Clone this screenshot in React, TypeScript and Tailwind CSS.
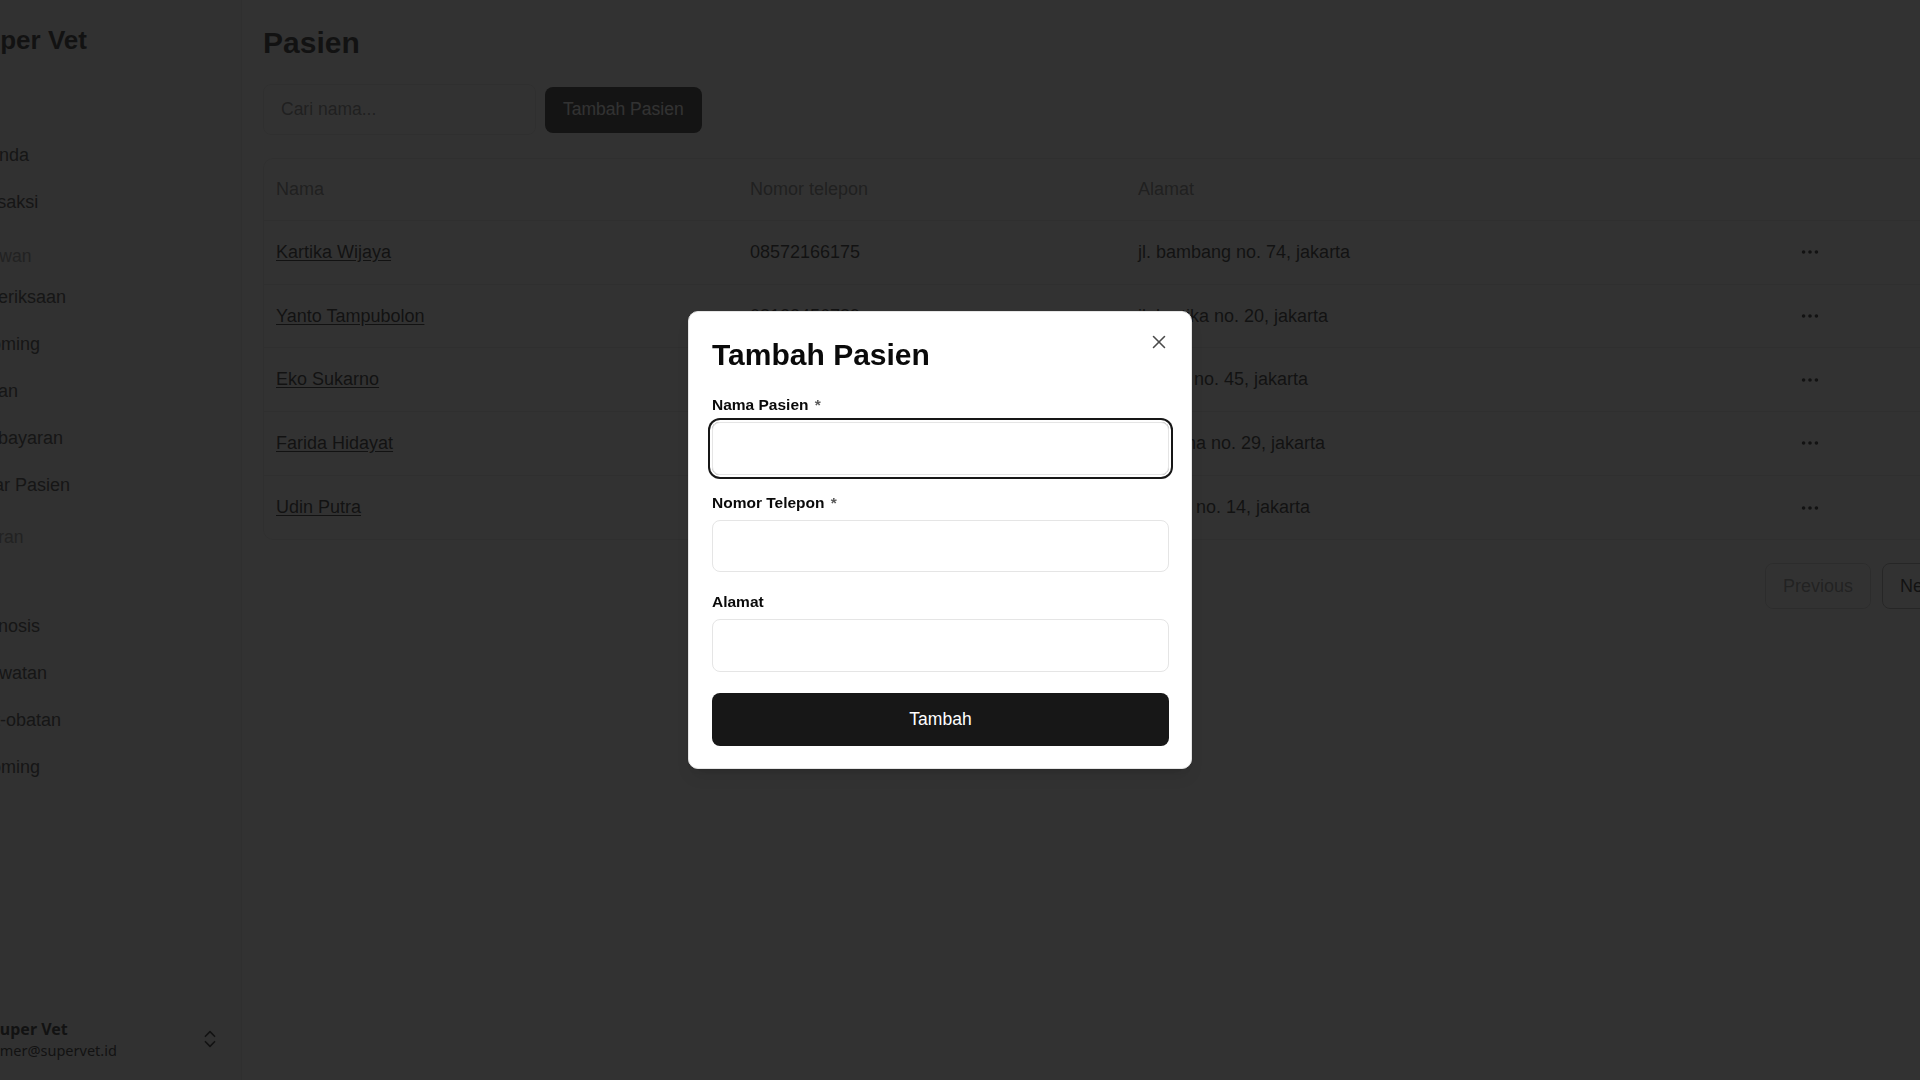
import { X, Ellipsis, ChevronsUpDown } from "lucide-react";

const group1 = ["Beranda", "Transaksi"];
const group2 = ["Pemeriksaan", "Grooming", "Antrian", "Pembayaran", "Daftar Pasien"];
const group3 = ["Ras", "Diagnosis", "Perawatan", "Obat-obatan", "Grooming"];

const rows = [
  { nama: "Kartika Wijaya", telp: "08572166175", alamat: "jl. bambang no. 74, jakarta" },
  { nama: "Yanto Tampubolon", telp: "08123456789", alamat: "jl. kartika no. 20, jakarta" },
  { nama: "Eko Sukarno", telp: "08567891234", alamat: "jl. kopi no. 45, jakarta" },
  { nama: "Farida Hidayat", telp: "08134567890", alamat: "jl. utama no. 29, jakarta" },
  { nama: "Udin Putra", telp: "08211223344", alamat: "jl. raya no. 14, jakarta" },
];

function NavItem({ label }: { label: string }) {
  return (
    <div className="flex h-[47px] items-center whitespace-nowrap pl-[39px] text-[18px] text-[#262626]">
      {label}
    </div>
  );
}

function GroupLabel({ label, className }: { label: string; className: string }) {
  return (
    <div className={`flex h-[36px] items-center whitespace-nowrap text-[17.5px] text-[#808080] ${className}`}>
      {label}
    </div>
  );
}

export default function App() {
  return (
    <div className="relative h-screen w-screen overflow-hidden bg-white font-['Liberation_Sans',Arial,sans-serif] text-[#0a0a0a]">
      <div className="-ml-[78px] flex h-full w-[2053px]">
        <aside className="flex h-full w-[320px] shrink-0 flex-col border-r border-[#e5e5e5] bg-[#f2f2f2]">
          <div className="flex h-[80px] items-center pl-[45px]">
            <span className="text-[26px] font-bold">Super Vet</span>
          </div>
          <nav className="mt-[52px] flex flex-col">
            {group1.map((l) => (
              <NavItem key={l} label={l} />
            ))}
            <GroupLabel label="Hewan" className="mt-[12px] pl-[55px]" />
            {group2.map((l) => (
              <NavItem key={l} label={l} />
            ))}
            <GroupLabel label="Aturan" className="mt-[10.5px] pl-[50px]" />
            {group3.map((l, i) => (
              <NavItem key={l + i} label={l} />
            ))}
          </nav>
          <div className="mt-auto flex items-center pb-[20px] pl-[69px] pr-[20px]">
            <div className="flex flex-1 flex-col font-['Noto_Sans',sans-serif] text-[#0a0a0a]">
              <span className="text-[16px] font-bold leading-[22px]">Super Vet</span>
              <span className="text-[14.5px] leading-[20px]">omer@supervet.id</span>
            </div>
            <ChevronsUpDown size={22} strokeWidth={1.8} className="text-[#0a0a0a]" />
          </div>
        </aside>

        <main className="w-[1733px] shrink-0 pl-[21px] pr-[20px] pt-[25px]">
          <h1 className="text-[30px] font-bold leading-[36px]">Pasien</h1>

          <div className="mt-[23px] flex items-center gap-[9px]">
            <input
              placeholder="Cari nama..."
              className="h-[51px] w-[273px] rounded-[8px] border border-[#e5e5e5] px-[17px] text-[17.5px] outline-none placeholder:text-[#737373]"
            />
            <button className="h-[46px] rounded-[8px] bg-[#171717] px-[18px] text-[17.5px] text-white">
              Tambah Pasien
            </button>
          </div>

          <div className="mt-[23px] rounded-[10px] border border-[#e5e5e5] text-[18px]">
            <div className="grid h-[62px] grid-cols-[474px_388px_656px_1fr] items-center border-b border-[#e5e5e5] text-[#737373]">
              <div className="px-3">Nama</div>
              <div className="px-3">Nomor telepon</div>
              <div className="px-3">Alamat</div>
              <div className="px-3"></div>
            </div>
            {rows.map((r, i) => (
              <div
                key={r.nama}
                className={`grid h-[63.7px] grid-cols-[474px_388px_656px_1fr] items-center ${
                  i < rows.length - 1 ? "border-b border-[#e5e5e5]" : ""
                }`}
              >
                <div className="px-3">
                  <a className="underline underline-offset-2">{r.nama}</a>
                </div>
                <div className="px-3">{r.telp}</div>
                <div className="px-3">{r.alamat}</div>
                <div className="px-3">
                  <button className="flex h-[32px] w-[32px] items-center justify-center">
                    <Ellipsis size={22} />
                  </button>
                </div>
              </div>
            ))}
          </div>

          <div className="mt-[23px] flex justify-end gap-[11px]">
            <button className="h-[46px] rounded-[8px] border border-[#a3a3a3] px-[17px] text-[18px] opacity-50">
              Previous
            </button>
            <button className="h-[46px] rounded-[8px] border border-[#a3a3a3] px-[17px] text-[18px]">
              Next
            </button>
          </div>
        </main>
      </div>

      <div className="fixed inset-0 z-40 bg-[rgba(20,20,20,0.87)]" />

      <div className="fixed left-[calc(50%-272px)] top-1/2 z-50 w-[504px] -translate-y-1/2 rounded-[10px] border border-[#e5e5e5] bg-white pb-[22.5px] pl-[23px] pr-[22px] pt-[25px] shadow-lg">
        <button className="absolute right-[21px] top-[19px] flex h-[22px] w-[22px] items-center justify-center text-[#4a4a4a]">
          <X size={22} strokeWidth={1.7} />
        </button>
        <h2 className="text-[30px] font-bold leading-[36px]">Tambah Pasien</h2>
        <form className="mt-[22px] flex flex-col">
          <div className="flex flex-col gap-[7px]">
            <label className="text-[15.5px] font-bold leading-[20px]">
              Nama Pasien <span className="ml-[2px] text-[#595959]">*</span>
            </label>
            <input className="h-[52.5px] rounded-[8px] border border-[#e5e5e5] px-3 text-[17.5px] outline-none ring-2 ring-[#171717] ring-offset-2 ring-offset-white" />
          </div>
          <div className="mt-[18px] flex flex-col gap-[7px]">
            <label className="text-[15.5px] font-bold leading-[20px]">
              Nomor Telepon <span className="ml-[2px] text-[#595959]">*</span>
            </label>
            <input className="h-[52.5px] rounded-[8px] border border-[#e5e5e5] px-3 text-[17.5px] outline-none" />
          </div>
          <div className="mt-[20px] flex flex-col gap-[7px]">
            <label className="text-[15.5px] font-bold leading-[20px]">Alamat</label>
            <input className="h-[52.5px] rounded-[8px] border border-[#e5e5e5] px-3 text-[17.5px] outline-none" />
          </div>
          <button
            type="button"
            className="mt-[21.5px] h-[52.5px] rounded-[8px] bg-[#171717] text-[17.5px] text-white"
          >
            Tambah
          </button>
        </form>
      </div>
    </div>
  );
}
